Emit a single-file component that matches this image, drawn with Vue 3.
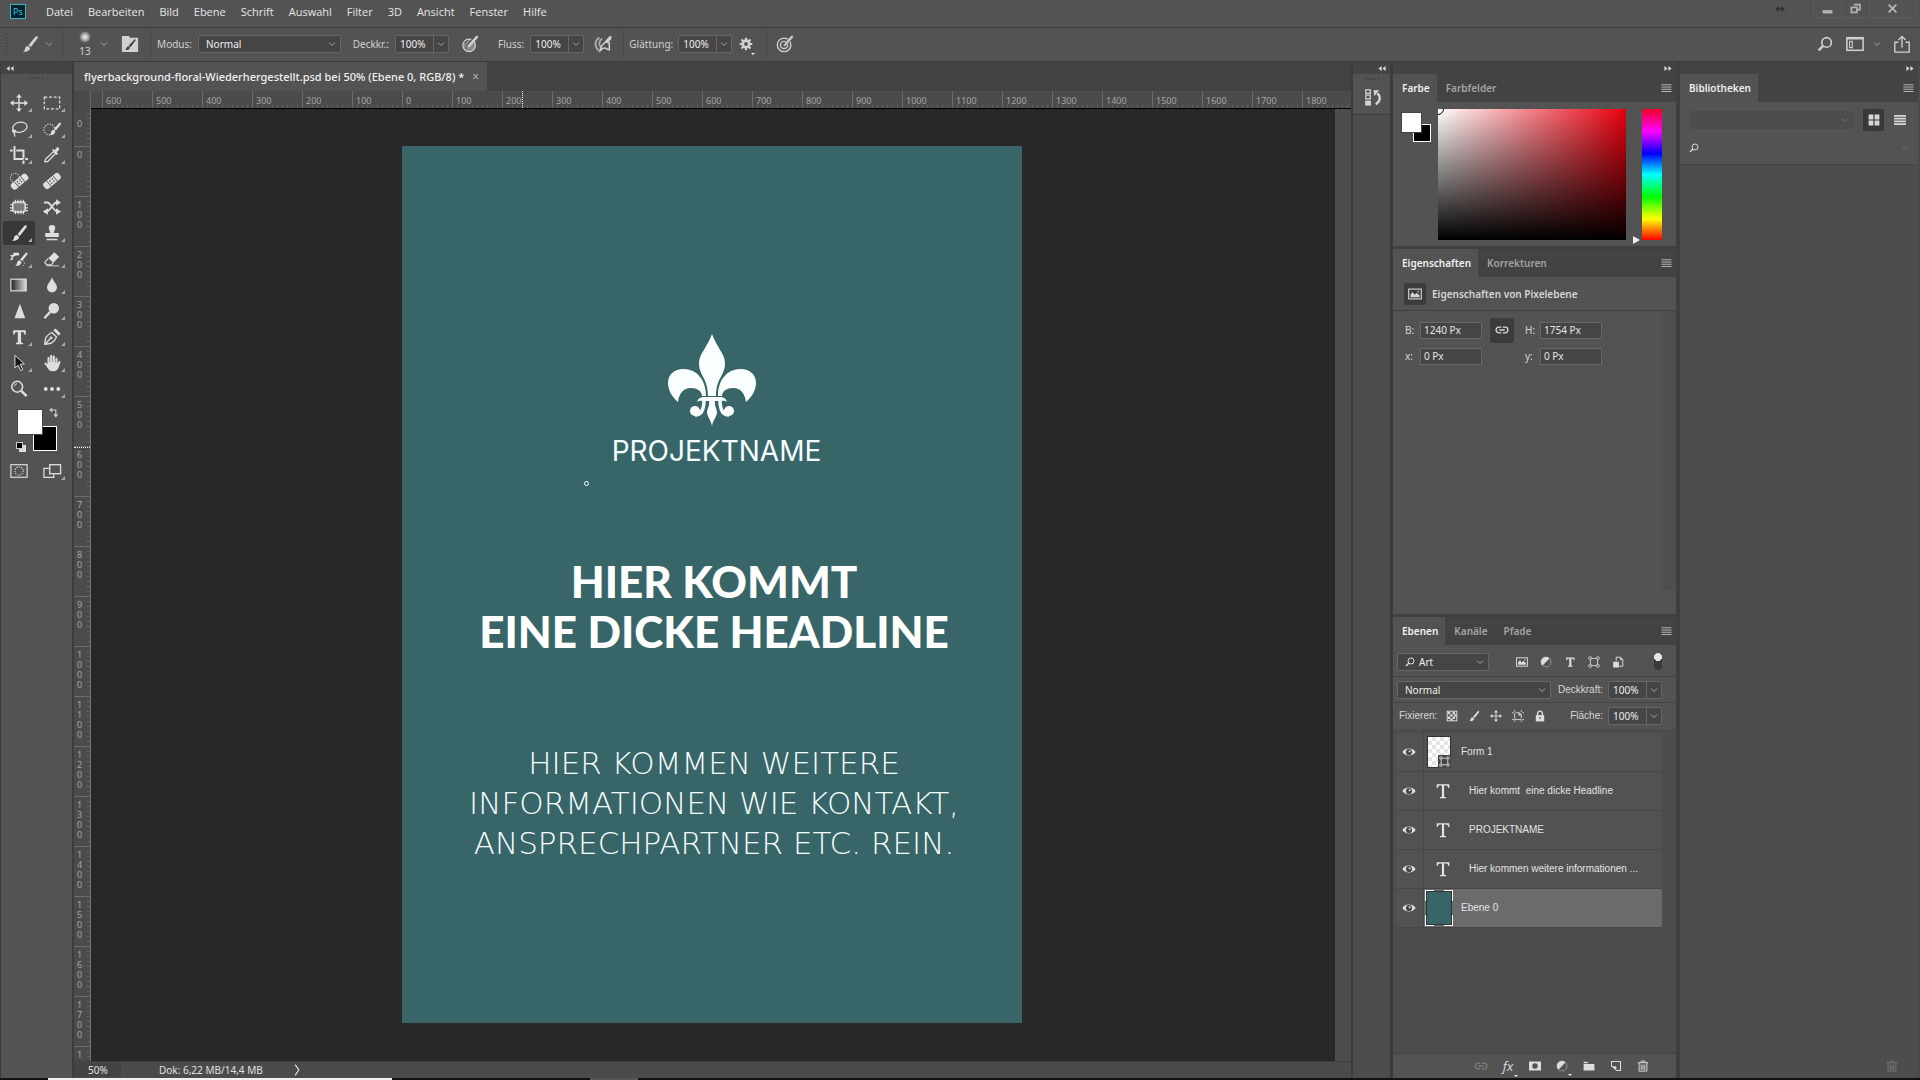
<script setup>
import { ref } from 'vue'

const glyphs = {
  brush: '<path d="M18 1.5c1 .6.8 1.600.2 2.500L11 13.200 8.300 11.300 15.800 2.300c.6-.8 1.400-1.200 2.200-.8zM7.400 12.200l2.700 2c.2 2.800-3.300 5-8 4.300 2-.8 2.100-2 2.400-3.400.3-1.600 1.500-2.700 2.900-2.900z" fill="currentColor"/>',
  move: '<path d="M10 2v16M2 10h16" stroke="currentColor" stroke-width="1.500"/><path d="M10 0l3.200 4H6.800zM10 20l3.200-4H6.800zM0 10l4-3.200v6.400zM20 10l-4-3.200v6.400z" fill="currentColor"/>',
  marquee: '<rect x="1.500" y="3.500" width="17" height="13" fill="none" stroke="currentColor" stroke-width="1.400" stroke-dasharray="3.200 2"/>',
  lasso: '<ellipse cx="11" cy="8" rx="8" ry="5.500" transform="rotate(-12 11 8)" fill="none" stroke="currentColor" stroke-width="1.400"/><path d="M3.500 10.500c-1.800 2 .5 4 2.600 2.800 1-1.200-1-2.500-2.300-1.200 0 3 2 3 1.600 6.400" fill="none" stroke="currentColor" stroke-width="1.400"/>',
  quick: '<circle cx="7" cy="10.500" r="6" fill="none" stroke="currentColor" stroke-width="1.300" stroke-dasharray="1.300 1.500"/><path d="M19.500 3c.8.6.5 1.500 0 2.200l-5 6.300-2.300-1.700 5.500-6.200c.5-.6 1.200-1 1.800-.6zM11.500 10.800l2.200 1.700c0 2.800-2.800 4.500-6.500 4 1.700-.8 1.500-2 1.900-3.200.4-1.400 1.200-2.300 2.400-2.500z" fill="currentColor"/>',
  crop: '<path d="M5 0v14.500h10M0 5h3M7 5h8v9M15 16v4M17 14.500h3" fill="none" stroke="currentColor" stroke-width="2.200"/>',
  dropper: '<path d="M11.800 6.200l2.200 2.200-8.500 8.500c-.8.800-2 .3-2.700 1l-.8-.8c.7-.7.2-1.900 1-2.700z" fill="none" stroke="currentColor" stroke-width="1.400"/><path d="M10 4.500l1.300-1.300 1.600 1.500 2.300-2.800c1.200-1.400 3.800.8 2.600 2.400L15.300 7l1.500 1.600-1.300 1.300z" fill="currentColor"/>',
  heal: '<g transform="rotate(-40 10 10)"><rect x="-1" y="6" width="22" height="8" rx="3" fill="currentColor"/><path d="M5.500 6v8M14.500 6v8" stroke="#535353" stroke-width="1"/><g fill="#535353"><circle cx="8.300" cy="8.500" r=".9"/><circle cx="11.700" cy="8.500" r=".9"/><circle cx="8.300" cy="11.500" r=".9"/><circle cx="11.700" cy="11.500" r=".9"/></g></g>',
  spot: '<circle cx="5.500" cy="6.500" r="5" fill="none" stroke="currentColor" stroke-width="1.200" stroke-dasharray="1.200 1.400"/><g transform="rotate(-40 10 10)"><rect x="-1" y="7" width="22" height="8" rx="3" fill="currentColor"/><path d="M5.500 7v8M14.500 7v8" stroke="#535353" stroke-width="1"/><g fill="#535353"><circle cx="8.300" cy="9.500" r=".9"/><circle cx="11.700" cy="9.500" r=".9"/><circle cx="8.300" cy="12.500" r=".9"/><circle cx="11.700" cy="12.500" r=".9"/></g></g>',
  patch: '<rect x="3" y="4.500" width="14" height="11" rx="3" fill="#7b7b7b" stroke="currentColor" stroke-width="1.600"/><path d="M6 2v4M9 2v4M12 2v4M15 2v4M6 14v4M9 14v4M12 14v4M15 14v4M0 7.500h4M0 11h4M0 14h3M16 7.500h4M16 11h4M17 14h3" stroke="currentColor" stroke-width="1.200"/>',
  content: '<path d="M1 5h4c3 0 7 10 11 10h1M1 15h3c4 0 7-10 11-10h2" fill="none" stroke="currentColor" stroke-width="2"/><path d="M14.500 1.500L20 5l-5.500 3.500zM14.500 11.500L20 15l-5.500 3.500zM5.500 11.500L0 15l5.500 3.500z" fill="currentColor"/>',
  stamp: '<path d="M10 1a3.600 3.600 0 0 1 3.600 3.600c0 2.200-1.700 2.800-1.700 5.400h5.600v4.500h-15V10h5.600c0-2.600-1.700-3.200-1.700-5.400A3.600 3.600 0 0 1 10 1zM4 16.500h12V18H4z" fill="currentColor"/>',
  history: '<path d="M19 3c.8.6.5 1.500 0 2.200l-5.500 7-2.300-1.700 6-6.900c.5-.6 1.200-1 1.800-.6zM10.500 11.500l2.200 1.700c0 2.800-3 5-7 4.300 1.700-.8 1.800-2 2.200-3.300.4-1.400 1.400-2.500 2.600-2.700z" fill="currentColor"/><path d="M0 5.500h3l1-2.500h6v3H7c-4 1-4 3-4 5H0l2-3z" fill="currentColor"/><path d="M15 12c2 2 1 4-1 6" fill="none" stroke="currentColor" stroke-dasharray="1.200 1.600"/>',
  eraser: '<path d="M12.500 2.500L18 7.500l-6.500 6.700-5.600-5z" fill="currentColor"/><path d="M6 9.400L2.500 13c-.6.700-.5 1.300 0 1.800l2 1.700H9l2.500-2.500" fill="none" stroke="currentColor" stroke-width="1.300"/><path d="M4 17.600h14" stroke="currentColor"/>',
  gradient: '<defs><linearGradient id="tg"><stop offset="0" stop-color="#222"/><stop offset="1" stop-color="#ddd"/></linearGradient></defs><rect x="1" y="3.500" width="17" height="13" fill="url(#tg)" stroke="currentColor" stroke-width="1.300"/>',
  drop: '<path d="M10 1.500c1.500 5 5.500 7.500 5.500 11.200a5.500 5.500 0 0 1-11 0C4.500 9 8.500 6.500 10 1.500z" fill="currentColor"/>',
  sharpen: '<path d="M11 2l6 16H5z" fill="currentColor"/>',
  dodge: '<circle cx="12" cy="7" r="5.800" fill="currentColor"/><path d="M8 11l-6.500 7" stroke="currentColor" stroke-width="2.600"/>',
  type: '<path d="M3.500 2.500h14v4.700h-1.600c-.3-2-.8-2.700-2.300-2.700h-1.300v10.700c0 1 .6 1.300 2.200 1.300V18H6.500v-1.500c1.600 0 2.200-.3 2.200-1.300V4.500H7.400c-1.500 0-2 .7-2.300 2.700H3.500z" fill="currentColor"/>',
  typeThin: '<path d="M3 2.500h14v4.200h-1.200c-.3-2-.9-2.800-2.500-2.800h-2.100v11.600c0 1 .6 1.300 2.200 1.300V18H6.600v-1.200c1.600 0 2.200-.3 2.200-1.300V3.900H6.700c-1.600 0-2.200.8-2.500 2.800H3z" fill="currentColor"/>',
  pen: '<path d="M2 18c0-6 1-10 8-13l5 5c-3 7-7 8-13 8zM2 18l6-6" fill="none" stroke="currentColor" stroke-width="1.500"/><circle cx="9" cy="11" r="1.600" fill="currentColor"/><path d="M11.500 2.500l6 6 2-2.500-5.500-5.500z" fill="currentColor"/>',
  select: '<path d="M5.500 1.500v14l3.600-3 2.700 6 2.300-1-2.700-6 4.600-.6z" fill="#161616" stroke="currentColor" stroke-width="1.100"/>',
  hand: '<path d="M5 11.500V4.400c0-1.600 2.300-1.600 2.300 0V9h.6V2.300c0-1.600 2.400-1.600 2.400 0V9h.6V3c0-1.600 2.300-1.600 2.300 0v6.500h.6V5.400c0-1.500 2.200-1.500 2.200 0V10l.4 0c.7-1.700 1.500-2.700 2.500-2.300 1 .4.3 2-.6 4.600-1.300 4-2.600 7-7 7-4.300 0-5.700-2.300-7-5L1.700 11c-.7-1.500 1.200-2.200 2-1z" fill="currentColor"/>',
  zoom: '<circle cx="8" cy="7.500" r="6" fill="none" stroke="currentColor" stroke-width="1.700"/><path d="M5 7a3 3 0 0 1 3-3" fill="none" stroke="currentColor"/><path d="M12.500 12l6 6" stroke="currentColor" stroke-width="2.800"/>',
  dots: '<g fill="currentColor"><circle cx="3" cy="10" r="2.200"/><circle cx="10" cy="10" r="2.200"/><circle cx="17" cy="10" r="2.200"/></g>',
  mask: '<rect x="1" y="3" width="18" height="14" fill="none" stroke="currentColor" stroke-width="1.300"/><circle cx="10" cy="10" r="4.600" fill="none" stroke="currentColor" stroke-width="1.400" stroke-dasharray="1.200 1.400"/>',
  screen: '<path d="M7 7H1v10h11v-3" fill="none" stroke="currentColor" stroke-width="1.400"/><rect x="7.500" y="3" width="12" height="10" fill="none" stroke="currentColor" stroke-width="1.500"/>',
  chevron: '<path d="M4 7l6 6 6-6" fill="none" stroke="currentColor" stroke-width="1.900"/>',
  brushPanel: '<path d="M1 3V1h8l1 2h9v16H1z" fill="currentColor"/><path d="M15.500 4.500l1 1-6 8-2-1.500zM8 12.500l2 1.500c-.5 2-2.500 3-5.500 2.500 1.500-1 1.500-3.500 3.500-4z" fill="#3c3c3c"/>',
  pressure: '<circle cx="9" cy="11.500" r="7" fill="#8b8b8b" stroke="currentColor" stroke-width="1.300"/><path d="M6 12l8-9M4 9l3-3M5 15l3-2" stroke="#535353" stroke-width="1.300"/><path d="M18.500 1c1 1 .8 1.500 0 2.400L10 13l-3 1.500.8-3L16 2c1-1.200 1.700-1.500 2.500-1z" fill="currentColor"/>',
  airbrush: '<path d="M6 3C1 6 0 12 5 17M9 4c-4 3-4 7-1 10" fill="none" stroke="#a8a8a8" stroke-width="2.200"/><path d="M18.500 1.500L8.500 12l-2 5.500 1.500-1c1-1.500 2-2 4-2s2.500 2 5 2V9l-2-2" fill="none" stroke="currentColor" stroke-width="1.700"/><path d="M19.500 1l-.5 4-4.500 4.500-2-2L17 2z" fill="currentColor"/>',
  target: '<circle cx="9" cy="11" r="7.500" fill="none" stroke="currentColor" stroke-width="1.500"/><circle cx="9" cy="11" r="4" fill="none" stroke="currentColor" stroke-width="1.500"/><path d="M18.500.8c1 .8.900 1.500.2 2.400L11 12l-2.800 1.200.6-3L16 1.500c.9-1 1.700-1.200 2.500-.7z" fill="currentColor" stroke="#535353" stroke-width=".7"/>',
  gear: '<circle cx="10" cy="10" r="4.700" fill="none" stroke="currentColor" stroke-width="4"/><path d="M10 1v4M10 15v4M1 10h4M15 10h4M3.600 3.600l3 3M13.400 13.400l3 3M3.600 16.400l3-3M13.400 6.600l3-3" stroke="currentColor" stroke-width="3"/>',
  search: '<circle cx="12" cy="8" r="6" fill="none" stroke="currentColor" stroke-width="2"/><path d="M8 12l-6 6" stroke="currentColor" stroke-width="3"/>',
  workspace: '<rect x="1" y="3" width="18" height="14" fill="none" stroke="currentColor" stroke-width="1.700"/><path d="M1 4h18" stroke="currentColor" stroke-width="2"/><path d="M4 7h3v7H4z" fill="none" stroke="currentColor" stroke-width="1.200"/>',
  share: '<path d="M6 8H2v11h16V8h-4M10 14V2M6 5.500L10 1.500l4 4" fill="none" stroke="currentColor" stroke-width="1.500"/>',
  lines: '<path d="M0 3.500h20M0 8h20M0 12.500h20M0 17h20" stroke="currentColor" stroke-width="2.400"/>',
  list: '<path d="M0 3h20M0 7.700h20M0 12.300h20M0 17h20" stroke="currentColor" stroke-width="3"/>',
  tiles: '<path d="M1 1h8v8H1zM11 1h8v8h-8zM1 11h8v8H1zM11 11h8v8h-8z" fill="currentColor"/>',
  historyPanel: '<path d="M2 2h5v4H2zM2 8h5v4H2z" fill="none" stroke="currentColor" stroke-width="1.400"/><path d="M1.300 14h6.400v5.500H1.300z" fill="currentColor"/><path d="M13 18c5-3 6-8 2-12" fill="none" stroke="currentColor" stroke-width="2.600"/><path d="M10.500 2.500h6.500L11.500 9z" fill="currentColor"/>',
  image: '<rect x="1" y="3" width="18" height="14" fill="none" stroke="currentColor" stroke-width="1.600"/><path d="M3.500 14.500V11l3-4 3 4 2.500-2.500 4.500 3v3z" fill="currentColor"/><circle cx="14.500" cy="6.500" r="1.200" fill="currentColor"/>',
  link: '<path d="M9 6H5.500a4 4 0 0 0 0 8H9M11 6h3.500a4 4 0 0 1 0 8H11M6 10h8" fill="none" stroke="currentColor" stroke-width="1.900"/>',
  adjust: '<circle cx="10" cy="10" r="8" fill="none" stroke="currentColor" stroke-width="1.600"/><path d="M15.700 4.300A8 8 0 0 1 4.300 15.700z" fill="#535353"/><path d="M4.300 15.700A8 8 0 0 1 15.700 4.300z" fill="currentColor"/>',
  shape: '<path d="M4 4h12v12H4z" fill="none" stroke="currentColor" stroke-width="1.500"/><g fill="#535353" stroke="currentColor" stroke-width="1.200"><path d="M1.500 1.500h4v4h-4zM14.500 1.500h4v4h-4zM1.500 14.500h4v4h-4zM14.500 14.500h4v4h-4z"/></g>',
  smart: '<path d="M7 8V2h7l4 4v11h-6" fill="none" stroke="currentColor" stroke-width="1.600"/><path d="M13.500 1.500v5H18M2 9.500h9.500V19H2z" fill="currentColor"/>',
  checker: '<rect x="2" y="2" width="16" height="16" fill="none" stroke="currentColor" stroke-width="1.600"/><path d="M3 3h4v4H3zM11 3h4v4h-4zM7 7h4v4H7zM14 7h4v4h-4zM3 11h4v4H3zM11 11h4v4h-4zM7 14h4v4H7z" fill="currentColor"/>',
  artboard: '<path d="M4.500 0v3M4.500 5v11h11M17.500 16H20M0 4.500h3M6 4.500h6.500l3 3V14M15.500 17.500V20M15.500 0v3M17.500 4.500H20M0 16h3M4.500 17.500V20" fill="none" stroke="currentColor" stroke-width="1.500"/><path d="M11 4v5h5z" fill="currentColor"/>',
  lock: '<path d="M3 8.500h14V19H3z" fill="currentColor"/><path d="M6 9V6a4 4 0 0 1 8 0v3" fill="none" stroke="currentColor" stroke-width="2.200"/><circle cx="10" cy="13.500" r="1.500" fill="#535353"/>',
  eye: '<path d="M.5 10C4 3.500 16 3.500 19.500 10 16 16.500 4 16.500.5 10z" fill="currentColor"/><circle cx="10" cy="10" r="4.400" fill="#484848"/><circle cx="11" cy="9" r="1.500" fill="currentColor"/>',
  layerMask: '<path fill-rule="evenodd" d="M0 2.500h20v15H0zM10 5.500a4.500 4.500 0 1 0 0 9 4.500 4.500 0 0 0 0-9z" fill="currentColor"/>',
  folder: '<path d="M1 3h6l2 2.500H1zM1 6.500h18v11H1z" fill="currentColor"/>',
  newLayer: '<path d="M2.500 11.500V2.500h15v15h-7" fill="none" stroke="currentColor" stroke-width="1.700"/><path d="M2 10.500h8.500V18z" fill="currentColor"/>',
  trash: '<path d="M1.500 4.500h17M7 4V1.800h6V4M3.500 5v13.500h13V5M7 7.500v9M10 7.500v9M13 7.500v9" fill="none" stroke="currentColor" stroke-width="1.600"/>',
  swap: '<path d="M6 5h7v8" fill="none" stroke="currentColor" stroke-width="1.800"/><path d="M7 1v8L2 5zM9 12h8l-4 6z" fill="currentColor"/>'
}

const menus = ['Datei', 'Bearbeiten', 'Bild', 'Ebene', 'Schrift', 'Auswahl', 'Filter', '3D', 'Ansicht', 'Fenster', 'Hilfe']

const tools = [
  ['move', 'Verschieben', 1], ['marquee', 'Auswahlrechteck', 1],
  ['lasso', 'Lasso', 1], ['quick', 'Schnellauswahl', 1],
  ['crop', 'Freistellen', 1], ['dropper', 'Pipette', 1],
  ['spot', 'Bereichsreparatur', 0], ['heal', 'Reparaturpinsel', 0],
  ['patch', 'Ausbessern', 0], ['content', 'Inhaltsbasiert verschieben', 0],
  ['brush', 'Pinsel', 1], ['stamp', 'Kopierstempel', 1],
  ['history', 'Protokollpinsel', 1], ['eraser', 'Radiergummi', 1],
  ['gradient', 'Verlauf', 0], ['drop', 'Weichzeichner', 1],
  ['sharpen', 'Scharfzeichner', 0], ['dodge', 'Abwedler', 1],
  ['type', 'Text', 1], ['pen', 'Zeichenstift', 1],
  ['select', 'Pfadauswahl', 1], ['hand', 'Hand', 1],
  ['zoom', 'Zoom', 0], ['dots', 'Symbolleiste bearbeiten', 1]
].map(([icon, label, more]) => ({ icon, label, more }))
const activeTool = ref('brush')

const rulerX = Array.from({ length: 25 }, (_, i) => Math.abs(i * 100 - 600))
// The last vertical mark has room for its leading digit only.
const rulerY = Array.from({ length: 19 }, (_, i) => (i < 18 ? String(i * 100).split('') : ['1']))

const blend = ref('Normal')
const layerBlend = ref('Normal')
const filterKind = ref('Art')
const opacity = ref('100%')
const flow = ref('100%')
const smoothing = ref('100%')
const layerOpacity = ref('100%')
const layerFill = ref('100%')

const layers = [
  { name: 'Form 1', kind: 'shape' },
  { name: 'Hier kommt\u00a0 eine dicke Headline', kind: 'text' },
  { name: 'PROJEKTNAME', kind: 'text' },
  { name: 'Hier kommen weitere informationen ...', kind: 'text' },
  { name: 'Ebene 0', kind: 'pixel' }
]
const activeLayer = ref('Ebene 0')
const props = [
  { id: 'pw', label: 'B:', value: '1240 Px' },
  { id: 'ph', label: 'H:', value: '1754 Px' },
  { id: 'px', label: 'x:', value: '0 Px' },
  { id: 'py', label: 'y:', value: '0 Px' }
]
</script>

<template>
  <div class="app">
    <header class="menubar">
      <div class="ps">Ps</div>
      <nav class="menus">
        <a v-for="m in menus" :key="m" href="#">{{ m }}</a>
      </nav>
      <svg class="drag" viewBox="0 0 20 12"><path d="M4 6h12" stroke="currentColor" stroke-width="3" /><path d="M0 6l7-6v12zM20 6l-7-6v12z" fill="currentColor" /></svg>
      <div class="winbtns">
        <button aria-label="Minimieren"><svg viewBox="0 0 20 20"><path d="M1 13h18v6H1z" fill="currentColor" /></svg></button>
        <button aria-label="Wiederherstellen"><svg viewBox="0 0 20 20"><path d="M7 3h11v9h-5M2.500 8h10v9h-10z" fill="none" stroke="currentColor" stroke-width="3" /></svg></button>
        <button class="close" aria-label="Schließen"><svg viewBox="0 0 20 20"><path d="M3 3l14 14M17 3L3 17" stroke="currentColor" stroke-width="3.500" /></svg></button>
      </div>
    </header>

    <div class="options">
      <span class="grip-v"></span>
      <button class="tool-now" aria-label="Pinsel"><svg class="i18" viewBox="0 0 20 20" v-html="glyphs.brush"></svg><svg class="i10" viewBox="0 0 20 20" v-html="glyphs.chevron"></svg></button>
      <span class="sep"></span>
      <button class="tip" aria-label="Pinselvorgabe"><span class="tip-size"><i></i>13</span><svg class="i10" viewBox="0 0 20 20" v-html="glyphs.chevron"></svg></button>
      <button class="bpanel" aria-label="Pinseleinstellungen"><svg class="i18" viewBox="0 0 20 20" v-html="glyphs.brushPanel"></svg></button>
      <span class="sep"></span>
      <div class="opt mode">
        <label for="mode">Modus:</label>
        <div class="drop w142"><select id="mode" v-model="blend"><option>Normal</option><option>Multiplizieren</option></select><svg class="i10" viewBox="0 0 20 20" v-html="glyphs.chevron"></svg></div>
      </div>
      <div class="opt deck">
        <label for="opacity">Deckkr.:</label>
        <div class="combo"><input id="opacity" v-model="opacity" /><button aria-label="Deckkraft wählen"><svg class="i10" viewBox="0 0 20 20" v-html="glyphs.chevron"></svg></button></div>
      </div>
      <button class="ob o1" aria-label="Druck für Deckkraft"><svg class="i18" viewBox="0 0 20 20" v-html="glyphs.pressure"></svg></button>
      <div class="opt">
        <label for="flow">Fluss:</label>
        <div class="combo"><input id="flow" v-model="flow" /><button aria-label="Fluss wählen"><svg class="i10" viewBox="0 0 20 20" v-html="glyphs.chevron"></svg></button></div>
      </div>
      <button class="ob o2" aria-label="Airbrush"><svg class="i18" viewBox="0 0 20 20" v-html="glyphs.airbrush"></svg></button>
      <span class="sep"></span>
      <div class="opt smooth">
        <label for="smooth">Glättung:</label>
        <div class="combo"><input id="smooth" v-model="smoothing" /><button aria-label="Glättung wählen"><svg class="i10" viewBox="0 0 20 20" v-html="glyphs.chevron"></svg></button></div>
      </div>
      <button class="ob gear" aria-label="Glättungsoptionen"><svg class="i14" viewBox="0 0 20 20" v-html="glyphs.gear"></svg></button>
      <span class="sep"></span>
      <button class="ob tgt" aria-label="Druck für Größe"><svg class="i18" viewBox="0 0 20 20" v-html="glyphs.target"></svg></button>
      <div class="opt-right">
        <button aria-label="Suchen"><svg class="i16" viewBox="0 0 20 20" v-html="glyphs.search"></svg></button>
        <button class="ws" aria-label="Arbeitsbereich"><svg class="i18" viewBox="0 0 20 20" v-html="glyphs.workspace"></svg><svg class="i10" viewBox="0 0 20 20" v-html="glyphs.chevron"></svg></button>
        <button aria-label="Freigeben"><svg class="i18" viewBox="0 0 20 20" v-html="glyphs.share"></svg></button>
      </div>
    </div>

    <main class="work">
      <aside class="toolbox">
        <div class="collapse left"><svg viewBox="0 0 20 12"><path d="M9 0v12L1 6zM19 0v12l-8-6z" fill="currentColor" /></svg></div>
        <span class="grip-h"></span>
        <div class="tools">
          <button v-for="t in tools" :key="t.icon" :aria-label="t.label" :class="{ on: activeTool === t.icon, more: t.more }" @click="activeTool = t.icon">
            <svg class="i18" viewBox="0 0 20 20" v-html="glyphs[t.icon]"></svg>
          </button>
        </div>
        <div class="colors">
          <span class="bg"></span><span class="fg"></span>
          <svg class="swap" viewBox="0 0 20 20" v-html="glyphs.swap"></svg>
          <span class="def"></span>
        </div>
        <div class="tools">
          <button aria-label="Maskierungsmodus"><svg class="i18" viewBox="0 0 20 20" v-html="glyphs.mask"></svg></button>
          <button class="more" aria-label="Bildschirmmodus"><svg class="i18" viewBox="0 0 20 20" v-html="glyphs.screen"></svg></button>
        </div>
      </aside>

      <section class="document">
        <div class="doctabs">
          <div class="doctab">flyerbackground-floral-Wiederhergestellt.psd bei 50% (Ebene 0, RGB/8) *<button aria-label="Dokument schließen">×</button></div>
        </div>
        <div class="viewport">
          <div class="corner"></div>
          <div class="ruler-x"><span v-for="(n, i) in rulerX" :key="i">{{ n }}</span><i class="mark"></i></div>
          <div class="ruler-y">
            <span class="first">0</span>
            <span v-for="(d, i) in rulerY" :key="i"><b v-for="(c, j) in d" :key="j">{{ c }}</b></span>
            <i class="mark"></i>
          </div>
          <div class="canvas">
            <article class="poster">
              <svg class="lily" viewBox="0 0 88 92" fill="#fbfeff">
                <path d="M44 0C40 12 31 20 31 29C31 42 40 44 40 62H48C48 44 57 42 57 29C57 20 48 12 44 0Z" />
                <path d="M10 68C3 62 0 55 0 49C0 40 7 35 15 35C30 35 38 47 38 62H34C34 57 29 54 23 54C15 54 11 60 10 68Z" />
                <path d="M78 68C85 62 88 55 88 49C88 40 81 35 73 35C58 35 50 47 50 62H54C54 57 59 54 65 54C73 54 77 60 78 68Z" />
                <path d="M29 68C31 62 36 63 39 63H49C52 63 57 62 59 68C57 66 53 67 49 67H39C35 67 31 66 29 68Z" />
                <path d="M36 66C36 76 33 81 27 81M52 66C52 76 55 81 61 81" fill="none" stroke="#fbfeff" stroke-width="3.500" />
                <circle cx="27" cy="77" r="5" /><circle cx="61" cy="77" r="5" />
                <path d="M41 66C42 72 39 74 39 79C40 84 43 86 44 92C45 86 48 84 49 79C49 74 46 72 47 66Z" />
              </svg>
              <p class="pname">PROJEKTNAME</p>
              <h1>HIER KOMMT<br />EINE DICKE HEADLINE</h1>
              <p class="info">HIER KOMMEN WEITERE<br />INFORMATIONEN WIE KONTAKT,<br />ANSPRECHPARTNER ETC. REIN.</p>
              <i class="cursor"></i>
            </article>
          </div>
          <div class="vscroll"></div>
        </div>
        <footer class="status"><span class="pct">50%</span><span class="dok">Dok: 6,22 MB/14,4 MB</span><svg class="i12" viewBox="0 0 20 20"><path d="M7 1l6 9-6 9" fill="none" stroke="currentColor" stroke-width="2" /></svg></footer>
      </section>

      <aside class="dock">
        <div class="collapse right"><svg viewBox="0 0 20 12"><path d="M9 0v12L1 6zM19 0v12l-8-6z" fill="currentColor" /></svg></div>
        <div class="dockbox"><span class="grip-h"></span><button aria-label="Protokoll"><svg class="i18" viewBox="0 0 20 20" v-html="glyphs.historyPanel"></svg></button></div>
      </aside>

      <aside class="panels">
        <div class="collapse right"><svg viewBox="0 0 20 12"><path d="M1 0v12l8-6zM11 0v12l8-6z" fill="currentColor" /></svg></div>
        <section class="panel color">
          <div class="tabs"><button class="on">Farbe</button><button>Farbfelder</button><svg class="menu" viewBox="0 0 20 20" v-html="glyphs.lines"></svg></div>
          <div class="colorbody">
            <div class="pair"><span class="bg"></span><span class="fg"></span></div>
            <div class="field"><i></i></div>
            <div class="hue"><i></i></div>
          </div>
        </section>
        <section class="panel props">
          <div class="tabs"><button class="on">Eigenschaften</button><button>Korrekturen</button><svg class="menu" viewBox="0 0 20 20" v-html="glyphs.lines"></svg></div>
          <div class="ptitle"><span class="pic"><svg class="i14" viewBox="0 0 20 20" v-html="glyphs.image"></svg></span>Eigenschaften von Pixelebene</div>
          <div class="pbody">
            <div class="pgrid">
              <template v-for="(p, i) in props" :key="p.id">
                <label :for="p.id">{{ p.label }}</label><input :id="p.id" :value="p.value" />
                <button v-if="i === 0" class="chain" aria-label="Proportionen verknüpfen"><svg class="i14" viewBox="0 0 20 20" v-html="glyphs.link"></svg></button>
                <span v-if="i === 2"></span>
              </template>
            </div>
            <div class="pscroll"></div>
          </div>
        </section>
        <section class="panel layers">
          <div class="tabs"><button class="on">Ebenen</button><button>Kanäle</button><button>Pfade</button><svg class="menu" viewBox="0 0 20 20" v-html="glyphs.lines"></svg></div>
          <div class="lrow filter">
            <div class="drop kind"><svg class="i10 lens" viewBox="0 0 20 20" v-html="glyphs.search"></svg><select v-model="filterKind" aria-label="Filtertyp"><option>Art</option><option>Name</option></select><svg class="i10" viewBox="0 0 20 20" v-html="glyphs.chevron"></svg></div>
            <div class="ficons">
              <button v-for="g in ['image', 'adjust', 'type', 'shape', 'smart']" :key="g" :aria-label="'Filter ' + g"><svg class="i12" viewBox="0 0 20 20" v-html="glyphs[g]"></svg></button>
            </div>
            <button class="toggle" aria-label="Filter ein/aus"></button>
          </div>
          <div class="lrow blend">
            <div class="drop wide"><select v-model="layerBlend" aria-label="Füllmethode"><option>Normal</option><option>Multiplizieren</option></select><svg class="i10" viewBox="0 0 20 20" v-html="glyphs.chevron"></svg></div>
            <label for="lop">Deckkraft:</label>
            <div class="combo"><input id="lop" v-model="layerOpacity" /><button aria-label="Deckkraft"><svg class="i10" viewBox="0 0 20 20" v-html="glyphs.chevron"></svg></button></div>
          </div>
          <div class="lrow fix">
            <span class="fixlabel">Fixieren:</span>
            <div class="licons">
              <button v-for="g in ['checker', 'brush', 'move', 'artboard', 'lock']" :key="g" :aria-label="'Fixieren ' + g"><svg class="i12" viewBox="0 0 20 20" v-html="glyphs[g]"></svg></button>
            </div>
            <label for="lfill">Fläche:</label>
            <div class="combo"><input id="lfill" v-model="layerFill" /><button aria-label="Fläche"><svg class="i10" viewBox="0 0 20 20" v-html="glyphs.chevron"></svg></button></div>
          </div>
          <ul class="list">
            <li v-for="l in layers" :key="l.name" :class="[l.kind, { on: activeLayer === l.name }]" @click="activeLayer = l.name">
              <button class="vis" aria-label="Sichtbarkeit"><svg class="i14" viewBox="0 0 20 20" v-html="glyphs.eye"></svg></button>
              <div class="body">
                <span class="thumb"><svg v-if="l.kind === 'text'" class="i18" viewBox="0 0 20 20" v-html="glyphs.typeThin"></svg><svg v-if="l.kind === 'shape'" class="badge" viewBox="0 0 20 20" v-html="glyphs.shape"></svg></span>
                <span class="name">{{ l.name }}</span>
              </div>
            </li>
          </ul>
          <footer class="lfoot">
            <button class="dim" aria-label="Verknüpfen"><svg class="i14" viewBox="0 0 20 20" v-html="glyphs.link"></svg></button>
            <button class="fx" aria-label="Ebenenstil">fx</button>
            <button v-for="g in ['layerMask', 'adjust', 'folder', 'newLayer', 'trash']" :key="g" :aria-label="g" :class="{ arrow: g === 'adjust' }"><svg class="i12" viewBox="0 0 20 20" v-html="glyphs[g]"></svg></button>
          </footer>
        </section>
      </aside>

      <aside class="libs">
        <div class="collapse right"><svg viewBox="0 0 20 12"><path d="M1 0v12l8-6zM11 0v12l8-6z" fill="currentColor" /></svg></div>
        <div class="tabs"><button class="on">Bibliotheken</button><svg class="menu" viewBox="0 0 20 20" v-html="glyphs.lines"></svg></div>
        <div class="libtop">
          <div class="librow"><div class="libsel"><select aria-label="Bibliothek" disabled></select><svg class="i10 faint" viewBox="0 0 20 20" v-html="glyphs.chevron"></svg></div><button class="on" aria-label="Kacheln"><svg class="i12" viewBox="0 0 20 20" v-html="glyphs.tiles"></svg></button><button aria-label="Liste"><svg class="i12" viewBox="0 0 20 20" v-html="glyphs.list"></svg></button></div>
          <div class="librow find"><svg class="i10" viewBox="0 0 20 20" v-html="glyphs.search"></svg><input aria-label="Bibliothek durchsuchen" disabled /><svg class="i10 faint" viewBox="0 0 20 20" v-html="glyphs.chevron"></svg></div>
        </div>
        <div class="libbody"></div>
        <footer class="libfoot"><svg class="i12" viewBox="0 0 20 20" v-html="glyphs.trash"></svg></footer>
      </aside>
    </main>
    <div class="taskbar"><i class="t1"></i><i class="t2"></i></div>
  </div>
</template>

<style>
body {
  margin: 0;
  background: #535353;
}
</style>

<style scoped>
* {
  box-sizing: border-box;
}
.app {
  display: flex;
  flex-direction: column;
  height: 100vh;
  overflow: hidden;
  background: #535353;
  color: #d6d6d6;
  font-family: "Noto Sans", "Open Sans", sans-serif;
  font-size: 10px;
  line-height: 14px;
}
button,
input,
select {
  margin: 0;
  padding: 0;
  border: 0;
  border-radius: 0;
  background: none;
  color: inherit;
  font: inherit;
  appearance: none;
  outline: none;
}
button {
  display: flex;
  align-items: center;
  justify-content: center;
}
svg {
  display: block;
  flex: none;
  overflow: visible;
}
.i10 { width: 10px; height: 10px; }
.i12 { width: 12px; height: 12px; }
.i14 { width: 14px; height: 14px; }
.i16 { width: 16px; height: 16px; }
.i18 { width: 18px; height: 18px; }

/* menu bar */
.menubar {
  flex: none;
  display: flex;
  height: 28px;
  border-bottom: 1px solid #3a3a3a;
}
.ps {
  width: 16px;
  height: 15px;
  margin: 4px 20px 0 10px;
  border: 1px solid #35b4c9;
  background: #04222c;
  color: #3cc4dc;
  font-size: 9px;
  line-height: 13px;
  text-align: center;
}
.menus {
  display: flex;
  flex: 1;
  gap: 15px;
  font-family: "Open Sans", sans-serif;
  font-size: 11px;
  line-height: 24px;
}
.menus a {
  color: #e6e6e6;
  text-decoration: none;
}
.drag {
  width: 10px;
  height: 6px;
  margin: 6px 28px 0 0;
  color: #303030;
}
.winbtns {
  display: flex;
  height: 18px;
  margin-right: 4px;
  border: 1px solid #5c5c5c;
  border-top: 0;
  color: #b4b4b4;
}
.winbtns button {
  width: 28px;
  border-right: 1px solid #5c5c5c;
}
.winbtns .close {
  width: 45px;
  border: 0;
}
.winbtns svg {
  width: 11px;
  height: 11px;
}

/* option bar */
.options {
  flex: none;
  display: flex;
  align-items: center;
  height: 34px;
  padding-bottom: 2px;
  border-bottom: 1px solid #3a3a3a;
  color: #d0d0d0;
}
.grip-v {
  width: 3px;
  height: 20px;
  margin: 0 13px 0 5px;
  background: repeating-linear-gradient(#474747 0 1px, transparent 1px 3px);
}
.grip-h {
  display: block;
  width: 14px;
  height: 2px;
  background: repeating-linear-gradient(90deg, #3c3c3c 0 1px, transparent 1px 3px);
}
.sep {
  width: 1px;
  height: 28px;
  background: #484848;
}
.tool-now {
  gap: 5px;
  width: 41px;
  justify-content: flex-start;
}
.options .i10,
.combo .i10,
.drop .i10 {
  color: #a8a8a8;
}
.tip {
  gap: 6px;
  margin-left: 14px;
}
.tip-size {
  display: flex;
  flex-direction: column;
  align-items: center;
  width: 16px;
  line-height: 12px;
}
.tip-size i {
  width: 12px;
  height: 12px;
  margin-bottom: 2px;
  border-radius: 50%;
  background: radial-gradient(#e8e8e8 10%, #9a9a9a 45%, transparent 72%);
}
.bpanel {
  margin: 0 11px 0 12px;
}
.opt {
  display: flex;
  align-items: center;
  justify-content: flex-end;
  gap: 6px;
}
.mode { width: 190px; }
.deck { width: 108px; }
.opt label {
  white-space: nowrap;
}
.drop,
.combo {
  display: flex;
  align-items: center;
  height: 18px;
  border: 1px solid #666;
  border-radius: 2px;
  background: #454545;
  color: #eee;
}
.drop {
  position: relative;
}
.drop select {
  flex: 1;
  min-width: 0;
  height: 16px;
  padding: 0 24px 0 7px;
}
.drop .i10 {
  position: absolute;
  right: 3px;
}
.w142 {
  width: 143px;
}
.combo {
  width: 54px;
}
.combo input {
  width: 37px;
  padding-left: 4px;
}
.combo button {
  width: 16px;
  height: 16px;
  border-left: 1px solid #666;
}
.ob {
  position: relative;
  width: 18px;
}
.o1 { margin: 0 19px 0 12px; }
.o2 { margin: 0 11px 0 10px; }
.smooth {
  width: 108px;
  gap: 5px;
}
.gear {
  margin: 0 11px 0 5px;
}
.gear::after,
.lfoot .arrow::after,
.fx::after {
  content: "";
  position: absolute;
  right: 0;
  bottom: -4px;
  border: 2px solid transparent;
  border-top-color: #eee;
  border-bottom: 0;
}
.tgt { margin-left: 9px; }
.opt-right {
  display: flex;
  align-items: center;
  gap: 11px;
  margin-left: auto;
  padding-right: 9px;
}
.ws {
  gap: 8px;
  margin-left: 2px;
}

/* work area */
.work {
  display: flex;
  flex: 1;
  min-height: 0;
}
.collapse {
  flex: none;
  display: flex;
  align-items: center;
  height: 12px;
  background: #444;
  color: #d8d8d8;
}
.collapse svg {
  width: 8px;
  height: 5px;
}
.collapse.left { padding-left: 5px; }
.collapse.right {
  justify-content: flex-end;
  padding-right: 4px;
}
.toolbox {
  flex: none;
  width: 74px;
  border-left: 1px solid #3c3c3c;
  border-right: 2px solid #3c3c3c;
}
.toolbox .grip-h {
  margin: 3px 0 11px 29px;
}
.tools {
  display: grid;
  grid-template-columns: 32px 32px;
  column-gap: 1px;
  padding-left: 2px;
  color: #dedede;
}
.tools button {
  position: relative;
  height: 24px;
  margin: 1px 0;
}
.tools .on {
  border-radius: 2px;
  background: #383838;
}
.tools .more::after {
  content: "";
  position: absolute;
  right: 3px;
  bottom: 3px;
  border: 2px solid transparent;
  border-right-color: #aaa;
  border-bottom-color: #aaa;
}
.colors {
  position: relative;
  height: 56px;
}
.colors .fg,
.colors .bg,
.pair .fg,
.pair .bg {
  position: absolute;
  border: 1px solid #444;
  background: #fff;
}
.colors .fg {
  left: 16px;
  top: 7px;
  width: 26px;
  height: 26px;
}
.colors .bg {
  left: 32px;
  top: 24px;
  width: 24px;
  height: 25px;
  border-color: #fff;
  background: #000;
}
.swap {
  position: absolute;
  left: 47px;
  top: 5px;
  width: 12px;
  height: 12px;
  color: #d0d0d0;
}
.def {
  position: absolute;
  left: 15px;
  top: 40px;
  width: 7px;
  height: 7px;
  border: 1px solid #ccc;
  background: #000;
  box-shadow: 3px 3px 0 #ddd;
}

/* document */
.document {
  display: flex;
  flex-direction: column;
  flex: 1;
  min-width: 0;
  border-right: 2px solid #3c3c3c;
}
.doctabs {
  flex: none;
  display: flex;
  height: 29px;
  background: #434343;
}
.doctab {
  display: flex;
  align-items: center;
  gap: 8px;
  padding: 0 8px 0 10px;
  background: #535353;
  color: #f0f0f0;
  font-size: 11px;
  font-weight: 500;
  white-space: nowrap;
}
.doctab button {
  color: #aaa;
  font-size: 12px;
}
.viewport {
  display: grid;
  grid-template: 18px minmax(0, 1fr) / 17px minmax(0, 1fr) 16px;
  flex: 1;
  min-height: 0;
}
.corner {
  border-right: 1px solid #666;
  background: #4a4a4a;
}
.ruler-x,
.ruler-y {
  position: relative;
  display: flex;
  overflow: hidden;
  background: #4b4b4b;
  color: #a6a6a6;
  font-size: 9px;
}
.ruler-x {
  grid-column: 2 / 4;
  padding-left: 11px;
  border-bottom: 1px solid #000;
}
.ruler-x span {
  flex: none;
  width: 50px;
  padding: 3px 0 0 3px;
  border-left: 1px solid #6c6c6c;
  background: repeating-linear-gradient(90deg, transparent 0 4px, #636363 4px 5px) 0 100% / 100% 3px no-repeat;
}
.ruler-y {
  flex-direction: column;
  border-right: 1px solid #727272;
}
.ruler-y span {
  flex: none;
  display: flex;
  flex-direction: column;
  height: 50px;
  padding: 3px 0 0 3px;
  border-top: 1px solid #6c6c6c;
  background: repeating-linear-gradient(transparent 0 4px, #636363 4px 5px) 100% 0 / 3px 100% no-repeat;
}
.ruler-y b {
  height: 10px;
  font-weight: 400;
  line-height: 10px;
}
.ruler-y .first {
  height: 37px;
  padding-top: 8px;
  border: 0;
}
.ruler-x .mark {
  position: absolute;
  left: 431px;
  top: 0;
  height: 17px;
  border-left: 1px dotted #eee;
}
.ruler-y .mark {
  position: absolute;
  left: 0;
  top: 338px;
  width: 16px;
  border-top: 1px dotted #eee;
}
.canvas {
  overflow: hidden;
  padding: 37px 0 0 311px;
  background: #282828;
}
.vscroll {
  background: #4d4d4d;
}
.poster {
  position: relative;
  width: 620px;
  height: 877px;
  padding-top: 188px;
  background: #386668;
  color: #f4fdff;
  text-align: center;
}
.lily {
  width: 88px;
  height: 92px;
  margin: 0 auto;
}
.poster p,
.poster h1 {
  margin: 0;
  white-space: nowrap;
}
.poster .pname {
  margin: 10px 0 0 9px;
  font-family: Inter, sans-serif;
  font-size: 28px;
  line-height: 30px;
}
.poster h1 {
  margin: 90px 0 0 4px;
  color: #fff;
  font-family: Lato, sans-serif;
  font-size: 44px;
  font-weight: 900;
  line-height: 50px;
}
.poster .info {
  margin: 87px 0 0 4px;
  font-family: "DejaVu Sans", sans-serif;
  font-size: 31px;
  font-weight: 200;
  line-height: 40px;
}
.cursor {
  position: absolute;
  left: 182px;
  top: 335px;
  width: 5px;
  height: 5px;
  border: 1px solid #fff;
  border-radius: 50%;
}
.status {
  flex: none;
  display: flex;
  align-items: center;
  height: 17px;
  border-top: 1px solid #3c3c3c;
  background: #4b4b4b;
  color: #e0e0e0;
}
.pct {
  width: 47px;
  padding-left: 14px;
  background: #434343;
}
.dok {
  width: 170px;
  padding-left: 38px;
}

/* icon dock */
.dock {
  flex: none;
  width: 40px;
  border-right: 3px solid #3c3c3c;
  background: #4d4d4d;
}
.dockbox {
  display: flex;
  flex-direction: column;
  align-items: center;
  height: 41px;
  padding: 4px 0 0 2px;
  border-bottom: 1px solid #3c3c3c;
  background: #535353;
}
.dockbox button {
  margin-top: 8px;
}

/* panels */
.panels {
  flex: none;
  display: flex;
  flex-direction: column;
  width: 287px;
  border-right: 4px solid #3f3f3f;
}
.tabs {
  flex: none;
  display: flex;
  height: 28px;
  padding-bottom: 1px;
  background: linear-gradient(#434343, #434343);
  color: #a4a4a4;
  font-weight: 600;
}
.tabs button {
  height: 28px;
  padding: 0 7px 1px 9px;
}
.tabs .on {
  background: #535353;
  color: #f0f0f0;
}
.menu {
  width: 11px;
  height: 10px;
  margin: 9px 4px 0 auto;
  color: #b4b4b4;
}
.panel {
  flex: none;
  border-bottom: 3px solid #3f3f3f;
}
.colorbody {
  display: flex;
  height: 144px;
  padding-top: 7px;
}
.pair {
  position: relative;
  width: 45px;
}
.pair .fg {
  left: 8px;
  top: 3px;
  width: 21px;
  height: 21px;
}
.pair .bg {
  left: 20px;
  top: 15px;
  width: 18px;
  height: 18px;
  border-color: #fff;
  background: #000;
}
.field {
  position: relative;
  overflow: hidden;
  width: 188px;
  height: 131px;
  background: linear-gradient(transparent, #000), linear-gradient(90deg, #fff, #e8000e);
}
.field i {
  position: absolute;
  left: -6px;
  top: -6px;
  width: 12px;
  height: 12px;
  border: 1px solid #000;
  border-radius: 50%;
}
.hue {
  position: relative;
  width: 20px;
  height: 131px;
  margin-left: 16px;
  background: linear-gradient(#f00020, #f0f 17%, #00f 34%, #0ff 50%, #0f0 67%, #ff0 84%, #f00);
}
.hue i {
  position: absolute;
  left: -9px;
  bottom: -4px;
  border: 4px solid transparent;
  border-left: 7px solid #f0f0f0;
  border-right: 0;
}
.props {
  display: flex;
  flex-direction: column;
  height: 368px;
}
.ptitle {
  flex: none;
  display: flex;
  align-items: center;
  gap: 6px;
  height: 34px;
  padding-left: 11px;
  border-bottom: 1px solid #3f3f3f;
  font-weight: 600;
}
.pic,
.chain {
  display: grid;
  place-items: center;
  width: 22px;
  height: 22px;
  border-radius: 2px;
  background: #3c3c3c;
}
.pbody {
  display: flex;
  flex: 1;
}
.pgrid {
  display: grid;
  grid-template: 26px 26px / 15px 62px 43px 15px 62px;
  align-content: start;
  align-items: center;
  flex: 1;
  padding: 6px 0 0 12px;
}
.pgrid input {
  height: 17px;
  padding-left: 3px;
  border: 1px solid #686868;
  background: #454545;
  color: #e6e6e6;
}
.chain {
  width: 24px;
  height: 25px;
  margin-left: 8px;
}
.pscroll {
  width: 13px;
  margin-bottom: 24px;
  background: #4e4e4e;
}
.layers {
  display: flex;
  flex-direction: column;
  flex: 1;
  min-height: 0;
  border: 0;
}
.lrow {
  flex: none;
  display: flex;
  align-items: center;
  height: 26px;
  padding: 0 14px 0 4px;
}
.filter {
  height: 32px;
  padding-top: 2px;
  border-bottom: 1px solid #444;
}
.blend {
  border-bottom: 1px solid #444;
}
.blend label,
.fix label,
.fixlabel,
.name {
  font-family: "Liberation Sans", sans-serif;
}
.blend label,
.fix label {
  margin: 0 5px 0 auto;
}
.kind { width: 92px; }
.kind select { padding-left: 21px; }
.kind .lens {
  left: 7px;
  color: #ddd;
}
.ficons {
  display: flex;
  gap: 12px;
  margin-left: 27px;
  color: #ddd;
}
.toggle {
  width: 8px;
  height: 17px;
  margin-left: auto;
  border-radius: 4px;
  background: radial-gradient(circle at 4px 4px, #e4e4e4 4px, #3a3a3a 4px);
}
.wide { width: 154px; }
.fixlabel {
  width: 49px;
  padding-left: 2px;
}
.licons {
  display: flex;
  gap: 10px;
  color: #ddd;
}
.list {
  flex: 1;
  min-height: 0;
  margin: 0;
  padding: 4px 14px 0 3px;
  list-style: none;
  background: #4d4d4d;
}
.list li {
  display: flex;
  height: 39px;
  border-bottom: 1px solid #474747;
  background: #525252;
}
.vis {
  width: 28px;
  padding-right: 2px;
  border-right: 1px solid #474747;
  color: #ddd;
}
.body {
  display: flex;
  align-items: center;
  flex: 1;
  color: #e4e4e4;
}
.thumb {
  position: relative;
  display: grid;
  place-items: center;
  width: 24px;
  height: 32px;
  margin: 0 10px 0 3px;
}
.text .thumb { margin: 0 14px 0 7px; }
.on .body { background: #6b6b6b; }
.shape .thumb {
  border: 1px solid #333;
  background: repeating-conic-gradient(#e4e4e4 0 25%, #fff 0 50%) 0 0 / 8px 8px;
}
.badge {
  position: absolute;
  right: -1px;
  bottom: -1px;
  width: 13px;
  height: 13px;
  padding: 1px;
  background: #444;
  color: #eee;
}
.pixel .thumb {
  width: 28px;
  height: 36px;
  margin: 0 8px 0 1px;
  background: linear-gradient(90deg, #fff 9px, transparent 9px 19px, #fff 19px) 0 0 / 100% 100%;
}
.pixel .thumb::before {
  content: "";
  position: absolute;
  inset: 11px 0;
  background: #6b6b6b;
}
.pixel .thumb::after {
  content: "";
  position: absolute;
  inset: 1px;
  border: 1px solid #333;
  background: #386668;
}
.lfoot {
  flex: none;
  display: flex;
  align-items: center;
  gap: 7px;
  height: 25px;
  padding-left: 78px;
  border-top: 1px solid #434343;
  color: #dcdcdc;
}
.lfoot button {
  position: relative;
  width: 20px;
}
.lfoot .dim { color: #7c7c7c; }
.lfoot .fx {
  font-family: "Open Sans", sans-serif;
  font-size: 13px;
  font-style: italic;
}

/* libraries */
.libs {
  flex: none;
  display: flex;
  flex-direction: column;
  width: 240px;
  border-right: 2px solid #4a4a4a;
}
.libtop {
  height: 63px;
  padding: 7px 8px 0 9px;
  border-bottom: 1px solid #444;
}
.librow {
  display: flex;
  align-items: center;
  gap: 5px;
  height: 22px;
}
.libsel {
  display: flex;
  align-items: center;
  flex: 1;
  height: 18px;
  margin-right: 4px;
  padding-right: 4px;
  background: #4d4d4d;
}
.libsel select {
  flex: 1;
}
.librow button {
  width: 21px;
  height: 22px;
}
.librow .on {
  border-radius: 2px;
  background: #383838;
}
.find {
  margin-top: 6px;
}
.find input {
  flex: 1;
  min-width: 0;
}
.librow .faint { color: #707070; }
.libbody {
  flex: 1;
  background: #4d4d4d;
}
.libfoot {
  display: flex;
  align-items: center;
  justify-content: flex-end;
  height: 25px;
  padding-right: 20px;
  background: #4d4d4d;
  color: #777;
}

.taskbar {
  flex: none;
  display: flex;
  height: 2px;
  padding-left: 48px;
  background: #111;
}
.t1 {
  width: 344px;
  background: #f2f2f2;
}
.t2 {
  width: 48px;
  margin-left: 198px;
  background: #555;
}
</style>
